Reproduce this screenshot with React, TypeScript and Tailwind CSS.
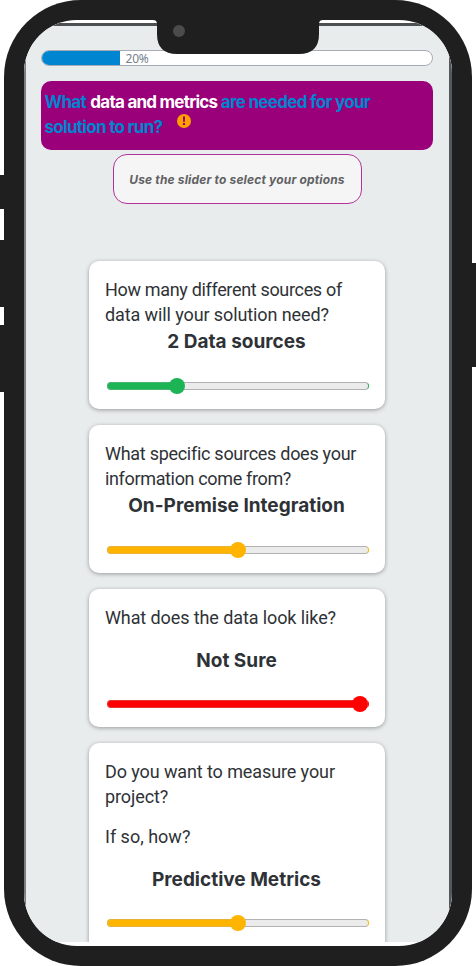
type Line = { text: string; spacing: string };

type CardData = {
  lines: Line[];
  extra?: string;
  value: string;
  fill: string;
  track: string;
  position: number;
  height: string;
  tall?: boolean;
};

const cards: CardData[] = [
  {
    lines: [
      { text: "How many different sources of", spacing: "tracking-[-0.33px]" },
      { text: "data will your solution need?", spacing: "tracking-[-0.1px]" },
    ],
    value: "2 Data sources", fill: "bg-[#1db455]", track: "border-r-[#1db455]", position: 70, height: "h-[148px]",
  },
  {
    lines: [
      { text: "What specific sources does your", spacing: "tracking-[-0.28px]" },
      { text: "information come from?", spacing: "tracking-[-0.35px]" },
    ],
    value: "On-Premise Integration", fill: "bg-[#ffb400]", track: "border-r-[#ffb400]", position: 131, height: "h-[148px]",
  },
  {
    lines: [{ text: "What does the data look like?", spacing: "tracking-[-0.1px]" }],
    value: "Not Sure", fill: "bg-[#ff0000]", track: "border-r-[#ff0000]", position: 253, height: "h-[138px]", tall: true,
  },
  {
    lines: [
      { text: "Do you want to measure your", spacing: "tracking-[-0.1px]" },
      { text: "project?", spacing: "tracking-[-0.1px]" },
    ],
    extra: "If so, how?",
    value: "Predictive Metrics", fill: "bg-[#ffb400]", track: "border-r-[#ffb400]", position: 131, height: "h-[220px]", tall: true,
  },
];

function Slider({ fill, track, position }: { fill: string; track: string; position: number }) {
  return (
    <div className="relative ml-[2px] flex h-4 w-[262px] items-center">
      <div className={`h-2 w-full overflow-hidden rounded-full border border-[#b2b2b2] bg-[#ebebeb] ${track}`}>
        <div className={`h-full ${fill}`} style={{ width: position }} />
      </div>
      <div className={`absolute left-0 h-2 rounded-l-full opacity-70 ${fill}`} style={{ width: position }} />
      <div className={`absolute top-0 size-4 rounded-full ${fill}`} style={{ left: position - 8 }} />
    </div>
  );
}

function Card({ card }: { card: CardData }) {
  return (
    <section className={`flex w-[296px] shrink-0 flex-col rounded-[10px] bg-white px-4 pt-[17px] shadow-[0_1px_4px_rgba(0,0,0,0.35)] ${card.height}`}>
      <div className="pl-[0.5px] font-[Roboto,sans-serif] text-[18px] leading-[24.7px] text-[#2e3236]">
        {card.lines.map((line) => (
          <p key={line.text} className={`whitespace-nowrap ${line.spacing}`}>{line.text}</p>
        ))}
        {card.extra && <p className="mt-4">{card.extra}</p>}
      </div>
      <h2 className={`text-center text-[19px] leading-7 font-bold whitespace-nowrap text-[#2e3236] ${card.tall ? "mt-4" : "mt-[1px]"}`}>{card.value}</h2>
      <div className={card.tall ? "mt-[21px]" : "mt-[22px]"}>
        <Slider fill={card.fill} track={card.track} position={card.position} />
      </div>
    </section>
  );
}

export default function App() {
  return (
    <div className="relative h-[966px] w-[476px] overflow-hidden bg-white font-[Inter,sans-serif]">
      {/* Hardware buttons */}
      <div className="absolute top-[175px] left-0 h-[34px] w-2 bg-[#1f1f1f]" />
      <div className="absolute top-[240px] left-0 h-[67px] w-2 bg-[#1f1f1f]" />
      <div className="absolute top-[325px] left-0 h-[67px] w-2 bg-[#1f1f1f]" />
      <div className="absolute top-[263px] right-0 h-[104px] w-2 bg-[#1f1f1f]" />

      <main className="mr-1 ml-1 h-[966px] w-[468px] rounded-[77px] bg-[#1f1f1f] px-[20px] pt-5 pb-5">
        <div className="h-[926px] w-[428px] overflow-hidden rounded-[53px] bg-white pt-[3px] pb-1">
          <div className="flex h-[919px] flex-col items-center overflow-hidden border-t-[3px] border-r-[3px] border-l-2 border-t-[#4d5053] border-r-[#54585c] border-l-[#7c7f82] bg-[#e8eced] pr-[2px]">
            <div className="mt-6 flex h-4 w-[392px] shrink-0 overflow-hidden rounded-full border border-[#a6abb5] bg-white">
              <div className="h-full w-[78px] bg-[#0085d0]" />
              <span className="ml-[6px] font-['Noto_Sans',sans-serif] text-[12px] leading-4 tracking-[-0.2px] text-[#74808c]">20%</span>
            </div>

            <h1 className="mt-[15px] h-[69px] w-[392px] shrink-0 rounded-[10px] bg-[#990079] pt-[9px] pl-1 text-[17px] leading-[25px] font-bold tracking-[-0.7px] whitespace-nowrap text-[#0085d0]">
              What <span className="ml-px tracking-[-0.75px] text-white">data and metrics</span> are needed for your
              <br />
              <span className="flex">
                solution to run?
                <svg className="-mt-px ml-[15px] size-[14px]" viewBox="0 0 14 14">
                  <circle cx="7" cy="7" r="7" fill="#ff9f00" />
                  <path d="M5.9 2.5h2.2l-.3 5.4H6.2ZM5.9 9h2.2v2.1H5.9Z" fill="#990079" />
                </svg>
              </span>
            </h1>

            <div className="mt-1 ml-px flex h-[50px] w-[249px] shrink-0 items-center justify-center rounded-[14px] border border-[#b23399] bg-[#f5f5f5] pt-px text-[12px] font-bold tracking-[0.16px] whitespace-nowrap text-[#5f6163] italic">
              Use the slider to select your options
            </div>

            <div className="mt-[57px] flex flex-col gap-4">
              {cards.map((card) => (
                <Card key={card.value} card={card} />
              ))}
            </div>
          </div>
        </div>
      </main>

      {/* Notch and camera */}
      <svg className="absolute top-4 left-[150px] h-10 w-44" viewBox="0 0 176 40">
        <path d="M0 0H176V4H173Q169 4 169 8V18Q169 38 149 38H27Q7 38 7 18V8Q7 4 3 4H0Z" fill="#1f1f1f" />
        <circle cx="29" cy="15" r="6" fill="#4b4b4b" />
      </svg>
    </div>
  );
}
